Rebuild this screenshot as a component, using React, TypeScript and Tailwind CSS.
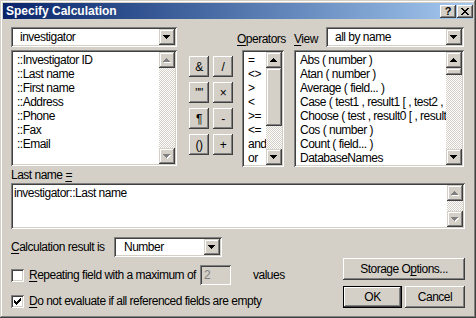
import React from 'react';

const raised =
  'bg-[#d4d0c8] shadow-[inset_-1px_-1px_#404040,inset_1px_1px_#fff,inset_-2px_-2px_#808080,inset_2px_2px_#d4d0c8]';
const scrollRaised =
  'bg-[#d4d0c8] shadow-[inset_-1px_-1px_#404040,inset_1px_1px_#d4d0c8,inset_-2px_-2px_#808080,inset_2px_2px_#fff]';
const sunken =
  'shadow-[inset_1px_1px_#808080,inset_-1px_-1px_#fff,inset_2px_2px_#404040,inset_-2px_-2px_#d4d0c8]';
const checker = 'bg-[image:repeating-conic-gradient(#fff_0_25%,#d4d0c8_0_50%)] bg-[length:2px_2px]';

const upPath = 'M3 0h1v1h1v1h1v1h1v1H0V3h1V2h1V1h1z';
const downPath = 'M0 0h7v1H6v1H5v1H4v1H3V3H2V2H1V1H0z';

const Arrow = ({ dir, disabled }: { dir: 'up' | 'down'; disabled?: boolean }) => (
  <svg width="8" height="5" viewBox="0 0 8 5" shapeRendering="crispEdges">
    {disabled && <path d={dir === 'up' ? upPath : downPath} fill="#fff" transform="translate(1 1)" />}
    <path d={dir === 'up' ? upPath : downPath} fill={disabled ? '#808080' : '#000'} />
  </svg>
);

const ScrollBtn = ({ dir, disabled }: { dir: 'up' | 'down'; disabled?: boolean }) => (
  <div className={`w-[16px] h-[16px] shrink-0 flex items-center justify-center ${scrollRaised}`}>
    <Arrow dir={dir} disabled={disabled} />
  </div>
);

const ScrollBar = ({ thumb, disabled }: { thumb?: number; disabled?: boolean }) => (
  <div className="w-[16px] h-full flex flex-col shrink-0">
    <ScrollBtn dir="up" disabled={disabled} />
    <div className={`flex-1 ${checker}`}>
      {thumb ? <div className={`w-[16px] ${scrollRaised}`} style={{ height: thumb }} /> : null}
    </div>
    <ScrollBtn dir="down" disabled={disabled} />
  </div>
);

const ListBox = ({
  items,
  className,
  thumb,
  disabled,
  pad,
}: {
  items: string[];
  className: string;
  thumb?: number;
  disabled?: boolean;
  pad: string;
}) => (
  <div className={`${sunken} bg-white p-[2px] flex ${className}`}>
    <div className={`flex-1 min-w-0 overflow-hidden ${pad}`}>
      {items.map((it) => (
        <div key={it} className="h-[14px] whitespace-nowrap">
          {it}
        </div>
      ))}
    </div>
    <ScrollBar thumb={thumb} disabled={disabled} />
  </div>
);

const Select = ({ value, className, pad }: { value: string; className: string; pad: string }) => (
  <div className={`${sunken} bg-white p-[2px] flex h-[20px] ${className}`}>
    <div className={`flex-1 flex items-center ${pad}`}>{value}</div>
    <div className={`w-[16px] h-[16px] flex items-center justify-center ${scrollRaised}`}>
      <Arrow dir="down" />
    </div>
  </div>
);

const checkRows = ['......x', '.....xx', 'x...xxx', 'xx.xxx.', 'xxxxx..', '.xxx...', '..x....'];

const CheckBox = ({ checked }: { checked?: boolean }) => (
  <div className={`${sunken} bg-white w-[13px] h-[13px] shrink-0 flex items-center justify-center`}>
    {checked && (
      <svg width="7" height="7" viewBox="0 0 7 7" shapeRendering="crispEdges">
        {checkRows.map((row, y) =>
          row.split('').map((c, x) => (c === 'x' ? <rect key={`${x}-${y}`} x={x} y={y} width="1" height="1" fill="#000" /> : null))
        )}
      </svg>
    )}
  </div>
);

const OpBtn = ({ label }: { label: string }) => (
  <div className={`w-[20px] h-[21px] flex items-center justify-center ${raised}`}>{label}</div>
);

const U = ({ children }: { children: React.ReactNode }) => <span className="underline underline-offset-2">{children}</span>;

const App: React.FC = () => {
  return (
    <div className="w-[476px] h-[318px] bg-[#d4d0c8] p-[3px] flex flex-col overflow-hidden text-black text-[12px] leading-[14px] tracking-[-0.5px] font-['Liberation_Sans',Arial,sans-serif] shadow-[inset_-1px_-1px_#404040,inset_1px_1px_#d4d0c8,inset_-2px_-2px_#808080,inset_2px_2px_#fff]">
      {/* title bar */}
      <div className="h-[16px] shrink-0 flex items-center pl-[3px] pr-[0px] bg-linear-to-r from-[#0a246a] to-[#a6caf0]">
        <span className="font-bold text-white tracking-[0px]">Specify Calculation</span>
        <div className="ml-auto flex gap-[1px]">
          <div className={`w-[16px] h-[13px] flex items-center justify-center font-bold text-[11px] leading-[11px] tracking-[0px] ${raised}`}>?</div>
          <div className={`w-[16px] h-[13px] flex items-center justify-center ${raised}`}>
            <svg width="8" height="7" viewBox="0 0 8 7" shapeRendering="crispEdges">
              <path d="M0 0h2l2 2.5L6 0h2L5 3.5 8 7H6L4 4.5 2 7H0l3-3.5z" fill="#000" />
            </svg>
          </div>
        </div>
      </div>

      <div className="flex-1 flex flex-col px-[8px]">
        {/* top section */}
        <div className="flex mt-[8px] h-[139px]">
          <div className="w-[166px] flex flex-col">
            <Select value="investigator" className="" pad="pl-[7px]" />
            <ListBox
              className="mt-[3px] flex-1"
              pad="pl-[4px] pt-[1px]"
              disabled
              items={['::Investigator ID', '::Last name', '::First name', '::Address', '::Phone', '::Fax', '::Email']}
            />
          </div>

          <div className="ml-[12px] mt-[29px] grid grid-cols-2 gap-x-[4px] gap-y-[5px] h-fit">
            <OpBtn label="&" />
            <OpBtn label="/" />
            <OpBtn label={'""'} />
            <OpBtn label="×" />
            <OpBtn label="¶" />
            <OpBtn label="-" />
            <OpBtn label="()" />
            <OpBtn label="+" />
          </div>

          <div className="ml-[3px] flex-1 flex flex-col">
            <div className="h-[20px] flex items-end">
              <span className="w-[58px] pl-[1px] pb-[1px]">
                <U>O</U>perators
              </span>
              <span className="w-[32px] pb-[1px]">
                <U>V</U>iew
              </span>
              <Select value="all by name" className="flex-1 mr-[1px]" pad="pl-[7px]" />
            </div>
            <div className="flex flex-1 mt-[3px]">
              <ListBox
                className="ml-[6px] w-[42px]"
                pad="pl-[4px] pt-[1px]"
                thumb={58}
                items={['=', '<>', '>', '<', '>=', '<=', 'and', 'or']}
              />
              <ListBox
                className="ml-[10px] w-[170px]"
                pad="pl-[4px] pt-[1px]"
                thumb={7}
                items={[
                  'Abs ( number )',
                  'Atan ( number )',
                  'Average ( field... )',
                  'Case ( test1 , result1 [ , test2 , result2',
                  'Choose ( test , result0 [ , result1',
                  'Cos ( number )',
                  'Count ( field... )',
                  'DatabaseNames',
                ]}
              />
            </div>
          </div>
        </div>

        {/* formula */}
        <div className="h-[14px] mt-[2px]">
          Last name <U>=</U>
        </div>
        <div className={`${sunken} bg-white p-[2px] flex h-[46px] mt-[1px]`}>
          <div className="flex-1 pl-[1px] pt-[1px]">investigator::Last name</div>
          <ScrollBar disabled />
        </div>

        {/* bottom */}
        <div className="flex mt-[8px]">
          <div className="flex flex-col">
            <div className="h-[20px] flex items-center">
              <span className="w-[103px]">
                <U>C</U>alculation result is
              </span>
              <Select value="Number" className="w-[108px]" pad="pl-[8px]" />
            </div>
            <div className="h-[20px] mt-[8px] flex items-center">
              <CheckBox />
              <span className="ml-[5px] w-[171px]">
                <U>R</U>epeating field with a maximum of
              </span>
              <div className={`${sunken} w-[31px] h-[20px] bg-[#d4d0c8] text-[#808080] pl-[4px] flex items-center`}>2</div>
              <span className="ml-[22px]">values</span>
            </div>
            <div className="h-[14px] mt-[9px] flex items-center">
              <CheckBox checked />
              <span className="ml-[5px]">
                <U>D</U>o not evaluate if all referenced fields are empty
              </span>
            </div>
          </div>

          <div className="ml-auto mt-[21px] flex flex-col">
            <div className={`w-[122px] h-[22px] flex items-center justify-center ${raised}`}>
              Storage O<U>p</U>tions...
            </div>
            <div className="flex gap-[3px] mt-[6px]">
              <div className="w-[59px] h-[22px] border border-black">
                <div className={`w-full h-full flex items-center justify-center ${raised}`}>OK</div>
              </div>
              <div className={`w-[60px] h-[22px] flex items-center justify-center ${raised}`}>Cancel</div>
            </div>
          </div>
        </div>
      </div>
    </div>
  );
};

export default App;
